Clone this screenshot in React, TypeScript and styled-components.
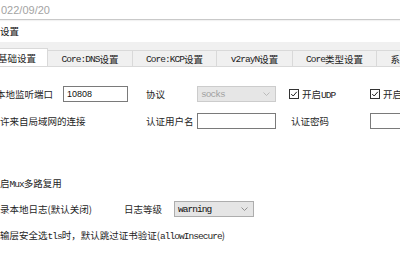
import React from "react";
import styled, { createGlobalStyle } from "styled-components";

const Global = createGlobalStyle`
  html, body { margin: 0; padding: 0; background: #ffffff; }
  body {
    width: 400px;
    height: 260px;
    overflow: hidden;
    font-family: "Noto Sans CJK SC", "Liberation Sans", sans-serif;
  }
`;

const Page = styled.div`
  width: 400px;
  height: 260px;
  overflow: hidden;
  display: flex;
  flex-direction: column;
  background: #fff;
  color: #1e1e1e;
  font-size: 9.5px;
`;

const DateBar = styled.div`
  height: 19px;
  display: flex;
  align-items: center;
  border-bottom: 1px solid #c9c9c9;
  box-shadow: 0 1px 1px rgba(0, 0, 0, 0.05);
  font-family: "Liberation Sans", sans-serif;
  font-size: 11px;
  color: #a3a3a3;
  padding-left: 1px;
`;

const TitleBar = styled.div`
  height: 22px;
  display: flex;
  align-items: center;
  font-size: 9.5px;
  color: #111;
`;

const Client = styled.div`
  flex: 1;
  display: flex;
  flex-direction: column;
  background: #f0f0f0;
  padding-top: 6px;
  min-height: 0;
`;

const TabStrip = styled.div`
  display: flex;
  align-items: flex-end;
  height: 18px;
  margin-left: -13px;
  overflow: hidden;
`;

const Tab = styled.div<{ $w: number; $active?: boolean }>`
  width: ${(p) => p.$w}px;
  flex: none;
  box-sizing: border-box;
  height: ${(p) => (p.$active ? 19 : 16)}px;
  margin-bottom: ${(p) => (p.$active ? -1 : 0)}px;
  margin-left: -1px;
  position: relative;
  z-index: ${(p) => (p.$active ? 1 : 0)};
  background: ${(p) => (p.$active ? "#ffffff" : "#f0f0f0")};
  border: 1px solid #d9d9d9;
  border-bottom: none;
  display: flex;
  align-items: center;
  justify-content: center;
  white-space: nowrap;
  color: #222;
  font-size: 9.5px;
  padding-top: ${(p) => (p.$active ? 0 : 1)}px;
`;

const TabPage = styled.div`
  flex: 1;
  background: #fff;
  border-top: 1px solid #d9d9d9;
  display: flex;
  flex-direction: column;
  padding-top: 19px;
  min-height: 0;
`;

const M = styled.span`
  font-family: "Liberation Mono", monospace;
  letter-spacing: -0.95px;
`;

const FormGrid = styled.div`
  display: grid;
  grid-template-columns: 63px 65px 18px 51px 79px 94px 60px;
  grid-auto-rows: 16px;
  row-gap: 11px;
  align-items: center;
`;

const Label = styled.div<{ $pl?: number; $ml?: number }>`
  white-space: nowrap;
  padding-left: ${(p) => p.$pl ?? 0}px;
  margin-left: ${(p) => p.$ml ?? 0}px;
  color: #1e1e1e;
  line-height: 16px;
`;

const TextBox = styled.div`
  box-sizing: border-box;
  height: 16px;
  border: 1px solid #7a7a7a;
  background: #fff;
  display: flex;
  align-items: center;
  padding-left: 3px;
  font-family: "Liberation Sans", sans-serif;
  font-size: 9px;
  color: #111;
`;

const Select = styled.div<{ $disabled?: boolean; $w?: number }>`
  box-sizing: border-box;
  height: 16px;
  width: ${(p) => (p.$w ? `${p.$w}px` : "auto")};
  border: 1px solid ${(p) => (p.$disabled ? "#cccccc" : "#adadad")};
  background: ${(p) => (p.$disabled ? "#e6e6e6" : "#e5e5e5")};
  display: flex;
  align-items: center;
  justify-content: space-between;
  padding: 0 5px 0 3px;
  color: ${(p) => (p.$disabled ? "#a0a0a0" : "#111")};
`;

const CheckWrap = styled.div<{ $pl?: number }>`
  display: flex;
  align-items: center;
  gap: 3px;
  padding-left: ${(p) => p.$pl ?? 0}px;
  white-space: nowrap;
`;

const Box = styled.span`
  width: 10px;
  height: 10px;
  box-sizing: border-box;
  border: 1px solid #333;
  background: #fff;
  display: inline-flex;
  align-items: center;
  justify-content: center;
`;

const Row = styled.div<{ $mt: number }>`
  display: flex;
  align-items: center;
  height: 16px;
  margin-top: ${(p) => p.$mt}px;
  white-space: nowrap;
`;

const Spacer = styled.div<{ $w: number }>`
  width: ${(p) => p.$w}px;
  flex: none;
`;

const Chevron = ({ color = "#888" }: { color?: string }) => (
  <svg width="7" height="4" viewBox="0 0 7 4">
    <polyline points="0.5,0.5 3.5,3.5 6.5,0.5" fill="none" stroke={color} strokeWidth="0.9" />
  </svg>
);

const Check = () => (
  <Box>
    <svg width="8" height="8" viewBox="0 0 8 8">
      <polyline points="1.2,4 3.2,6 6.8,1.8" fill="none" stroke="#222" strokeWidth="1" />
    </svg>
  </Box>
);

export default function App() {
  return (
    <Page>
      <Global />
      <DateBar>022/09/20</DateBar>
      <TitleBar>设置</TitleBar>
      <Client>
        <TabStrip>
          <Tab $w={62} $active>基础设置</Tab>
          <Tab $w={86}><M>Core:DNS</M>设置</Tab>
          <Tab $w={85}><M>Core:KCP</M>设置</Tab>
          <Tab $w={77}><M>v2rayN</M>设置</Tab>
          <Tab $w={85}><M>Core</M>类型设置</Tab>
          <Tab $w={86}>系统代理设置</Tab>
        </TabStrip>
        <TabPage>
          <FormGrid>
            <Label $ml={-4}>本地监听端口</Label>
            <TextBox>10808</TextBox>
            <span />
            <Label>协议</Label>
            <Select $disabled>
              <M>socks</M>
              <Chevron color="#b5b5b5" />
            </Select>
            <CheckWrap $pl={13}>
              <Check />
              <span>开启<M>UDP</M></span>
            </CheckWrap>
            <CheckWrap>
              <Check />
              <span>开启嗅探</span>
            </CheckWrap>

            <Label>许来自局域网的连接</Label>
            <span />
            <span />
            <Label>认证用户名</Label>
            <TextBox />
            <Label $pl={15}>认证密码</Label>
            <TextBox />
          </FormGrid>

          <Row $mt={47}>
            <Label>启<M>Mux</M>多路复用</Label>
          </Row>
          <Row $mt={9}>
            <Label>录本地日志(默认关闭)</Label>
            <Spacer $w={32} />
            <Label>日志等级</Label>
            <Spacer $w={12} />
            <Select $w={80}>
              <M>warning</M>
              <Chevron />
            </Select>
          </Row>
          <Row $mt={11}>
            <Label>
              输层安全选<M>tls</M>时，默认跳过证书验证(<M>allowInsecure</M>)
            </Label>
          </Row>
        </TabPage>
      </Client>
    </Page>
  );
}
